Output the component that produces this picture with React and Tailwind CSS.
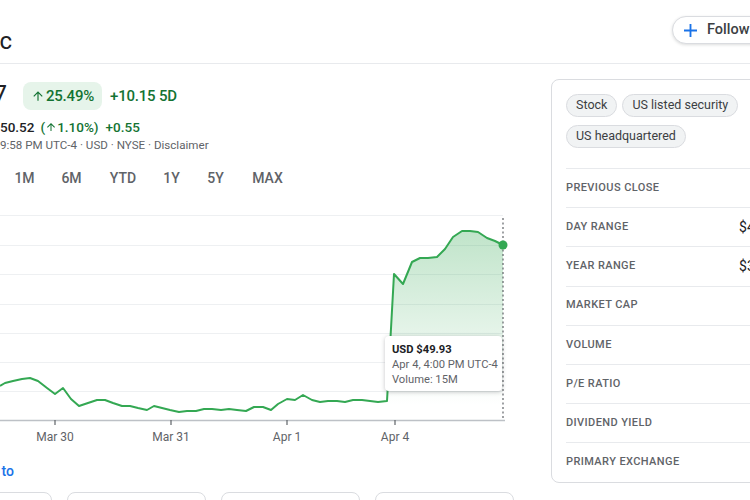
import React from 'react';

// price points traced from the 5D chart (page coordinates)
const points = [
  [0, 386], [5, 383], [13, 381], [22, 379], [30, 378], [38, 381], [47, 388], [55, 394], [63, 388],
  [71, 399], [79, 406], [88, 403], [97, 400], [105, 400], [113, 403], [122, 406], [130, 406],
  [138, 408], [147, 410], [154, 406], [162, 408], [170, 410], [179, 412], [187, 411], [196, 411],
  [204, 409], [212, 409], [221, 410], [229, 409], [237, 410], [246, 411], [254, 407], [263, 407],
  [271, 410], [278, 404], [287, 399], [295, 400], [303, 395], [312, 400], [320, 402], [328, 401],
  [337, 401], [345, 402], [353, 400], [362, 400], [370, 401], [378, 402], [387, 401], [394, 274],
  [403, 284], [412, 262], [420, 258], [428, 258], [437, 257], [445, 249], [453, 237], [462, 231],
  [470, 231], [478, 232], [487, 238], [495, 241], [503, 245],
];

const linePoints = points.map(([x, y]) => `${x},${y}`).join(' ');
const jumpIdx = points.findIndex(([x]) => x === 387);
const fillPath =
  'M' + points.slice(jumpIdx).map(([x, y]) => `${x} ${y}`).join(' L') + ' L503 420 L387 420 Z';

const gridLines = [215.5, 245.5, 274.5, 304.5, 333.5, 362.5, 391.5];
const ticks = [
  [55, 'Mar 30'],
  [171, 'Mar 31'],
  [287, 'Apr 1'],
  [395, 'Apr 4'],
];

const tabs = [
  ['1M', 'w-[45px]'],
  ['6M', 'w-[49px]'],
  ['YTD', 'w-[54px]'],
  ['1Y', 'w-[43px]'],
  ['5Y', 'w-[45px]'],
  ['MAX', 'w-[59px]'],
];

const stats = [
  ['Previous close', '$39.31'],
  ['Day range', '$44.27 - $51.00'],
  ['Year range', '$31.30 - $73.34'],
  ['Market cap', '38.18B USD'],
  ['Volume', '1.15M'],
  ['P/E ratio', '-'],
  ['Dividend yield', '-'],
  ['Primary exchange', 'NYSE'],
];

const ArrowUp = ({ size }) => (
  <svg width={size} height={size} viewBox="0 0 24 24" fill="currentColor">
    <path d="M4 12l1.41 1.41L11 7.83V20h2V7.83l5.58 5.59L20 12l-8-8-8 8z" />
  </svg>
);

// text that starts off the left edge of the crop, ending at the box's right side
const Clipped = ({ className, children }) => (
  <div className={`shrink-0 flex justify-end ${className}`}>
    <span className="shrink-0 whitespace-nowrap">{children}</span>
  </div>
);

const App = () => {
  return (
    <div className="w-[750px] h-[500px] overflow-hidden bg-white font-['Roboto',sans-serif] text-[#202124]">
      {/* Header */}
      <header className="flex items-start h-[64px] border-b border-[#e8eaed]">
        <Clipped className="w-[12px] mt-[25px] text-[24px] leading-[32px]">Twitter Inc</Clipped>
        <button className="ml-[660px] mt-[16px] shrink-0 flex items-center gap-[10px] h-[28px] pl-[11px] pr-[20px] rounded-full border border-[#dadce0] bg-white shadow-[0_1px_3px_rgba(60,64,67,0.18)] text-[14.5px] font-medium text-[#3c4043]">
          <svg width="13" height="13" viewBox="0 0 14 14">
            <path d="M7 0v14M0 7h14" stroke="#1a73e8" strokeWidth="2" />
          </svg>
          Follow
        </button>
      </header>

      <div className="flex items-start">
        {/* Left column */}
        <div className="w-[551px] shrink-0">
          <div className="flex items-center h-[28px] mt-[18px]">
            <Clipped className="w-[7px] text-[26px] leading-[28px] -mt-[3px]">$49.97</Clipped>
            <div className="ml-[16px] w-[79px] h-[28px] flex items-center justify-center gap-[1px] rounded-[8px] bg-[#e6f4ea] text-[#137333] text-[15px] font-medium tracking-[-0.2px]">
              <ArrowUp size={14} />
              25.49%
            </div>
            <span className="ml-[8px] text-[15px] font-medium tracking-[-0.2px] text-[#137333]">+10.15 5D</span>
          </div>

          <div className="mt-[8px] flex items-center h-[18px] text-[13.5px] font-medium">
            <Clipped className="w-0">After Hours: $</Clipped>
            <span>50.52</span>
            <span className="ml-[6px] flex items-center text-[#137333]">
              (<ArrowUp size={12} />1.10%)
            </span>
            <span className="ml-[7px] text-[#137333]">+0.55</span>
          </div>

          <div className="mt-[1px] flex h-[16px] text-[11.6px] leading-[16px] text-[#5f6368]">
            <Clipped className="w-0">Closed: Apr 4, 7:5</Clipped>
            <span className="whitespace-nowrap">9:58 PM UTC-4 · USD · NYSE · Disclaimer</span>
          </div>

          {/* Range tabs */}
          <div className="mt-[15px] ml-[2px] flex text-[14px] leading-[20px] font-medium text-[#5f6368]">
            {tabs.map(([t, w]) => (
              <span key={t} className={`${w} text-center`}>{t}</span>
            ))}
          </div>

          {/* Chart */}
          <div className="relative mt-[12px] w-[520px] h-[250px]">
            <svg width="520" height="250" viewBox="0 200 520 250" className="block">
              <defs>
                <linearGradient id="area" x1="0" y1="225" x2="0" y2="405" gradientUnits="userSpaceOnUse">
                  <stop offset="0" stopColor="#34a853" stopOpacity="0.32" />
                  <stop offset="1" stopColor="#34a853" stopOpacity="0" />
                </linearGradient>
              </defs>
              {gridLines.map((y) => (
                <line key={y} x1="0" x2="503" y1={y} y2={y} stroke="#eef0f2" strokeWidth="1" />
              ))}
              <path d={fillPath} fill="url(#area)" />
              <polyline points={linePoints} fill="none" stroke="#34a853" strokeWidth="2" strokeLinejoin="round" />
              <line x1="0" x2="505" y1="420.5" y2="420.5" stroke="#bdc1c6" strokeWidth="1.5" />
              {ticks.map(([x, label]) => (
                <g key={label}>
                  <line x1={x} x2={x} y1="420" y2="425" stroke="#5f6368" strokeWidth="1.2" />
                  <text x={x} y="441" textAnchor="middle" fontSize="12" fill="#5f6368" fontFamily="Roboto, sans-serif">
                    {label}
                  </text>
                </g>
              ))}
              <line x1="503" x2="503" y1="218" y2="420" stroke="#5f6368" strokeWidth="1.2" strokeDasharray="2 2.5" />
              <circle cx="503" cy="245" r="4.5" fill="#34a853" />
            </svg>

            {/* hover tooltip */}
            <div className="absolute left-[385px] top-[136px] w-[117px] h-[55px] bg-white rounded-[4px] shadow-[0_1px_4px_rgba(60,64,67,0.3)] px-[7px] pt-[6px] text-[11.2px] leading-[15px]">
              <div className="font-bold text-[#202124]">USD $49.93</div>
              <div className="text-[#5f6368] whitespace-nowrap">Apr 4, 4:00 PM UTC-4</div>
              <div className="text-[#5f6368]">Volume: 15M</div>
            </div>
          </div>

          <div className="mt-[11px] flex h-[20px]">
            <Clipped className="w-[14px] text-[14px] leading-[20px] font-medium text-[#1a73e8]">Compare to</Clipped>
          </div>

          <div className="mt-[11px] -ml-[87px] flex gap-[15px]">
            {[0, 1, 2, 3].map((i) => (
              <div key={i} className="w-[139px] h-[60px] shrink-0 border border-[#dadce0] rounded-[8px]" />
            ))}
          </div>
        </div>

        {/* Right card */}
        <aside className="w-[300px] shrink-0 mt-[15px] border border-[#dadce0] rounded-[8px] px-[14px]">
          <div className="pt-[14px] pb-[20px] flex flex-wrap gap-x-[5px] gap-y-[8px] w-[180px]">
            {['Stock', 'US listed security', 'US headquartered'].map((c) => (
              <span
                key={c}
                className="h-[23px] flex items-center px-[9px] rounded-full border border-[#dadce0] bg-[#f1f3f4] text-[12.5px] text-[#3c4043] whitespace-nowrap"
              >
                {c}
              </span>
            ))}
          </div>
          {stats.map(([label, value]) => (
            <div key={label} className="h-[39.2px] border-t border-[#e8eaed] flex items-center justify-between">
              <span className="text-[11px] font-medium uppercase tracking-[0.4px] text-[#5f6368]">{label}</span>
              <span className="text-[14px] text-[#202124]">{value}</span>
            </div>
          ))}
        </aside>
      </div>
    </div>
  );
};

export default App;
